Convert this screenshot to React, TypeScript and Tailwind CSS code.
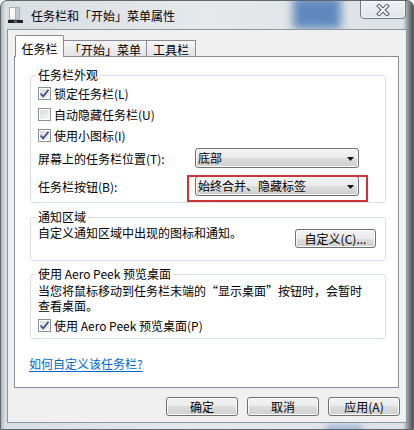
import React from "react";

type Kids = { children: React.ReactNode };

function CheckBox({ checked }: { checked: boolean }) {
  return (
    <span className="flex h-[13px] w-[13px] shrink-0 items-center justify-center border border-[#8e8f8f] bg-white">
      <span className="flex h-[9px] w-[9px] items-center justify-center bg-[linear-gradient(135deg,#d9dbdd,#f6f6f6)]">
        {checked && (
          <svg width="11" height="11" viewBox="0 0 11 11" className="overflow-visible">
            <path d="M1.5 5.5 L4.2 8.3 L9.5 1.8" fill="none" stroke="#3a4f8e" strokeWidth="1.8" />
          </svg>
        )}
      </span>
    </span>
  );
}

function CheckRow({ checked, label }: { checked: boolean; label: string }) {
  return (
    <div className="flex h-[21px] items-center gap-[3px]">
      <CheckBox checked={checked} />
      <span className="whitespace-nowrap">{label}</span>
    </div>
  );
}

function Select({ value }: { value: string }) {
  return (
    <div className="flex h-[20px] w-[164px] items-center justify-between rounded-[3px] border border-[#707070] bg-[linear-gradient(#f2f2f2_0%,#ebebeb_50%,#dddddd_50%,#cfcfcf_100%)] pl-[2px] pr-[4px] shadow-[inset_0_0_0_1px_#fbfbfb]">
      <span className="whitespace-nowrap">{value}</span>
      <svg width="7" height="4" viewBox="0 0 7 4" className="mt-[2px]">
        <path d="M0 0h7L3.5 4z" fill="#111" />
      </svg>
    </div>
  );
}

function PushButton({ children, className = "" }: Kids & { className?: string }) {
  return (
    <div
      className={`flex h-[19px] items-center justify-center whitespace-nowrap rounded-[3px] border border-[#707070] bg-[linear-gradient(#f2f2f2_0%,#ebebeb_50%,#dddddd_50%,#cfcfcf_100%)] shadow-[inset_0_0_0_1px_#fcfcfc] ${className}`}
    >
      {children}
    </div>
  );
}

function Group({ title, className = "", children }: Kids & { title: string; className?: string }) {
  return (
    <fieldset className={`ml-[15px] w-[356px] rounded-[3px] border border-[#d5dfe5] px-[7px] ${className}`}>
      <legend className="-ml-[2px] px-[2px] whitespace-nowrap">{title}</legend>
      {children}
    </fieldset>
  );
}

function TaskbarIcon() {
  return (
    <svg width="16" height="17" viewBox="0 0 16 17">
      <rect x="1.5" y="0.5" width="6" height="12" fill="#fbfbfb" stroke="#a8adb2" />
      <rect x="7.5" y="0.5" width="4" height="12" fill="#c4c8cc" stroke="#a8adb2" />
      <rect x="0" y="13" width="15" height="3" fill="#1d1f22" />
      <rect x="6" y="13.5" width="3" height="2" fill="#6c7278" />
    </svg>
  );
}

function CloseGlyph() {
  return (
    <svg width="14" height="12" viewBox="0 0 14 12">
      <path d="M3 2 L11 10 M11 2 L3 10" stroke="#4f5965" strokeWidth="4" strokeLinecap="square" />
      <path d="M3 2 L11 10 M11 2 L3 10" stroke="#ffffff" strokeWidth="2" strokeLinecap="square" />
    </svg>
  );
}

export default function App() {
  return (
    <div className="relative flex h-[430px] w-[414px] flex-col overflow-hidden rounded-t-[7px] border border-[#5f6770] bg-[linear-gradient(90deg,#aeb3b8_0px,#d9dee3_4px,#e6e9ec_50%,#dde1e5_402px,#8f9397_407px,#3f4245_413px)] font-['Noto_Sans_CJK_SC','Liberation_Sans',sans-serif] text-[12px] leading-[14px] text-black">
      {/* glass: blurred desktop behind the caption */}
      <div className="pointer-events-none absolute left-[292px] top-[-4px] h-[32px] w-[48px] bg-[#3f72b3] opacity-80 blur-[5px]" />
      <div className="pointer-events-none absolute bottom-[-3px] left-[325px] h-[6px] w-[36px] bg-[#4d7fc0] opacity-60 blur-[3px]" />

      {/* caption */}
      <div className="relative flex h-[28px] shrink-0 items-center pl-[7px]">
        <TaskbarIcon />
        <span className="ml-[7px] mt-[2px] whitespace-nowrap">任务栏和「开始」菜单属性</span>
        <div className="absolute right-[7px] top-[-1px] flex h-[19px] w-[46px] items-center justify-center rounded-b-[4px] border border-[#6d7986] bg-[linear-gradient(#f4f6f8cc,#dfe4e9cc)] shadow-[inset_0_0_0_1px_#ffffffaa]">
          <CloseGlyph />
        </div>
      </div>

      {/* client area */}
      <div className="relative ml-[6px] flex h-[394px] w-[400px] flex-col border border-[#8a96a2] bg-[#f0f0f0]">
        {/* tabs */}
        <div className="relative z-10 -mb-px ml-[7px] mt-[5px] flex h-[22px] items-end">
          <div className="flex h-[22px] w-[49px] justify-center rounded-t-[2px] border border-b-0 border-[#898c95] bg-white pt-[6px]">
            任务栏
          </div>
          <div className="mb-px flex h-[16px] w-[83px] justify-center border border-b-0 border-l-0 border-[#898c95] bg-[linear-gradient(#f5f5f5,#e4e4e4)] pt-[2px]">
            「开始」菜单
          </div>
          <div className="mb-px flex h-[16px] w-[49px] justify-center border border-b-0 border-l-0 border-[#898c95] bg-[linear-gradient(#f5f5f5,#e4e4e4)] pt-[2px]">
            工具栏
          </div>
        </div>

        {/* tab page */}
        <div className="ml-[6px] flex h-[332px] w-[385px] flex-col border border-[#898c95] bg-white">
          <Group title="任务栏外观" className="mt-[11px] pb-[6px]">
            <div className="mt-px">
              <CheckRow checked label="锁定任务栏(L)" />
              <CheckRow checked={false} label="自动隐藏任务栏(U)" />
              <CheckRow checked label="使用小图标(I)" />
            </div>
            <div className="mt-[2px] flex items-center">
              <span className="w-[157px] whitespace-nowrap pt-[2px]">屏幕上的任务栏位置(T):</span>
              <Select value="底部" />
            </div>
            <div className="mt-[8px] flex items-center">
              <span className="w-[157px] whitespace-nowrap pt-[2px]">任务栏按钮(B):</span>
              <div className="relative">
                <Select value="始终合并、隐藏标签" />
                <div className="pointer-events-none absolute left-[-8px] top-[-1px] h-[27px] w-[181px] border-2 border-[#cf3434]" />
              </div>
            </div>
          </Group>

          <Group title="通知区域" className="mt-[7px] pb-[12px]">
            <div className="flex items-start justify-between">
              <span className="mt-[2px] whitespace-nowrap">自定义通知区域中出现的图标和通知。</span>
              <PushButton className="mr-[2px] mt-[5px] w-[81px]">自定义(C)...</PushButton>
            </div>
          </Group>

          <Group title="使用 Aero Peek 预览桌面" className="mt-[6px] pb-[2px]">
            <p className="mt-[2px] whitespace-nowrap leading-[15px]">
              当您将鼠标移动到任务栏末端的“显示桌面”按钮时，会暂时
              <br />
              查看桌面。
            </p>
            <div className="mt-[2px]">
              <CheckRow checked label="使用 Aero Peek 预览桌面(P)" />
            </div>
          </Group>

          <a className="ml-[14px] mt-[18px] w-fit whitespace-nowrap text-[#0066cc] underline underline-offset-2">
            如何自定义该任务栏?
          </a>
        </div>

        {/* dialog buttons */}
        <div className="mt-[9px] flex justify-end gap-[9px] pr-[6px]">
          <PushButton className="w-[72px]">确定</PushButton>
          <PushButton className="w-[72px]">取消</PushButton>
          <PushButton className="w-[72px]">应用(A)</PushButton>
        </div>
      </div>
    </div>
  );
}
